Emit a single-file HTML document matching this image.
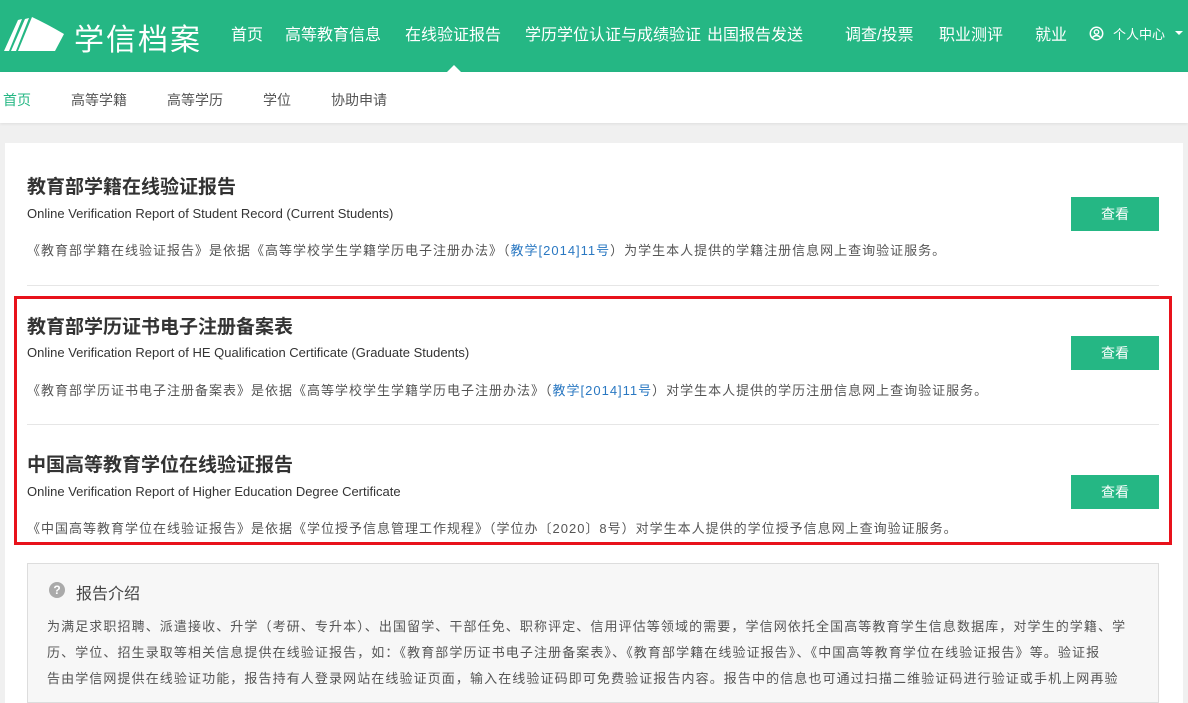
<!DOCTYPE html>
<html><head><meta charset="utf-8"><style>
*{margin:0;padding:0;box-sizing:border-box}
body{width:1188px;height:686px;overflow:hidden;background:#f0f0f0;font-family:"Liberation Sans","Noto Sans CJK SC",sans-serif;color:#333;position:relative}
.hd{position:absolute;left:0;top:0;width:1188px;height:72px;background:#25b784}
.abs{position:absolute;white-space:nowrap}
.nav{color:#fff;font-size:16px;top:21px}
.sub{position:absolute;top:72px;left:0;width:1188px;height:51px;background:#fff;box-shadow:0 1px 3px rgba(0,0,0,.08)}
.sn{font-size:14px;color:#555;top:90px}
.card{position:absolute;left:5px;top:143px;width:1178px;height:560px;background:#fff}
.t{font-size:19px;font-weight:bold;color:#333;left:27px}
.e{font-size:13px;color:#333;left:27px}
.d{font-size:13px;color:#555;left:27px;letter-spacing:1px}
.d a{color:#2a78c2;text-decoration:none}
.btn{position:absolute;left:1071px;width:88px;height:34px;background:#25b784;color:#fff;font-size:14px;text-align:center;line-height:34px}
.hr{position:absolute;left:27px;width:1132px;height:1px;background:#e6e6e6}
.info{position:absolute;left:27px;top:563px;width:1132px;height:140px;background:#f7f7f7;border:1px solid #ddd}
.p{font-size:13px;color:#555;left:47px;letter-spacing:1.1px}
</style></head><body>
<div class="hd"></div>
<svg class="abs" style="left:3px;top:14px" width="62" height="40" viewBox="0 0 62 40"><path d="M1 37 L15 6 L19 5 L6 37Z M8 37 L22 5 L26 4 L13 37Z M15 37 L29 3 Q44 10 61 20 L52 37Z" fill="#fff"/></svg>
<div class="abs" style="left:74px;top:15px;font-size:30px;color:#fff;letter-spacing:2px">学信档案</div>
<div class="abs nav" style="left:231px">首页</div>
<div class="abs nav" style="left:285px">高等教育信息</div>
<div class="abs nav" style="left:405px">在线验证报告</div>
<div class="abs nav" style="left:525px">学历学位认证与成绩验证</div>
<div class="abs nav" style="left:707px">出国报告发送</div>
<div class="abs nav" style="left:845px">调查/投票</div>
<div class="abs nav" style="left:939px">职业测评</div>
<div class="abs nav" style="left:1035px">就业</div>
<svg class="abs" style="left:1089px;top:26px" width="15" height="15" viewBox="0 0 15 15"><circle cx="7.5" cy="7.5" r="6.2" fill="none" stroke="#fff" stroke-width="1.5"/><circle cx="7.5" cy="6" r="2.2" fill="none" stroke="#fff" stroke-width="1.4"/><path d="M3.5 11.5 Q7.5 7.5 11.5 11.5" fill="none" stroke="#fff" stroke-width="1.4"/></svg>
<div class="abs" style="left:1113px;top:24px;font-size:13px;color:#fff">个人中心</div>
<div class="abs" style="left:1175px;top:31px;width:0;height:0;border-left:4px solid transparent;border-right:4px solid transparent;border-top:4px solid #fff"></div>
<div class="sub"></div>
<div class="abs" style="left:447px;top:65px;width:0;height:0;border-left:7px solid transparent;border-right:7px solid transparent;border-bottom:7px solid #fff"></div>
<div class="abs sn" style="left:3px;color:#25b784">首页</div>
<div class="abs sn" style="left:71px">高等学籍</div>
<div class="abs sn" style="left:167px">高等学历</div>
<div class="abs sn" style="left:263px">学位</div>
<div class="abs sn" style="left:331px">协助申请</div>
<div class="card"></div>
<div class="abs t" style="top:172px">教育部学籍在线验证报告</div>
<div class="abs e" style="top:206px">Online Verification Report of Student Record (Current Students)</div>
<div class="abs d" style="top:240px">《教育部学籍在线验证报告》是依据《高等学校学生学籍学历电子注册办法》（<a>教学[2014]11号</a>）为学生本人提供的学籍注册信息网上查询验证服务。</div>
<div class="btn" style="top:197px">查看</div>
<div class="hr" style="top:285px"></div>
<div class="abs t" style="top:312px">教育部学历证书电子注册备案表</div>
<div class="abs e" style="top:345px">Online Verification Report of HE Qualification Certificate (Graduate Students)</div>
<div class="abs d" style="top:380px">《教育部学历证书电子注册备案表》是依据《高等学校学生学籍学历电子注册办法》（<a>教学[2014]11号</a>）对学生本人提供的学历注册信息网上查询验证服务。</div>
<div class="btn" style="top:336px">查看</div>
<div class="hr" style="top:424px"></div>
<div class="abs t" style="top:450px">中国高等教育学位在线验证报告</div>
<div class="abs e" style="top:484px">Online Verification Report of Higher Education Degree Certificate</div>
<div class="abs d" style="top:518px">《中国高等教育学位在线验证报告》是依据《学位授予信息管理工作规程》（学位办〔2020〕8号）对学生本人提供的学位授予信息网上查询验证服务。</div>
<div class="btn" style="top:475px">查看</div>
<div class="abs" style="left:14px;top:296px;width:1158px;height:249px;border:3px solid #e8121b"></div>
<div class="info"></div>
<div class="abs" style="left:49px;top:582px;width:16px;height:16px;border-radius:50%;background:#aaa;color:#fff;font-size:12px;font-weight:bold;text-align:center;line-height:16px">?</div>
<div class="abs" style="left:76px;top:580px;font-size:16px;color:#444">报告介绍</div>
<div class="abs p" style="top:616px">为满足求职招聘、派遣接收、升学（考研、专升本）、出国留学、干部任免、职称评定、信用评估等领域的需要，学信网依托全国高等教育学生信息数据库，对学生的学籍、学</div>
<div class="abs p" style="top:642px">历、学位、招生录取等相关信息提供在线验证报告，如：《教育部学历证书电子注册备案表》、《教育部学籍在线验证报告》、《中国高等教育学位在线验证报告》等。验证报</div>
<div class="abs p" style="top:668px">告由学信网提供在线验证功能，报告持有人登录网站在线验证页面，输入在线验证码即可免费验证报告内容。报告中的信息也可通过扫描二维验证码进行验证或手机上网再验</div>
</body></html>
